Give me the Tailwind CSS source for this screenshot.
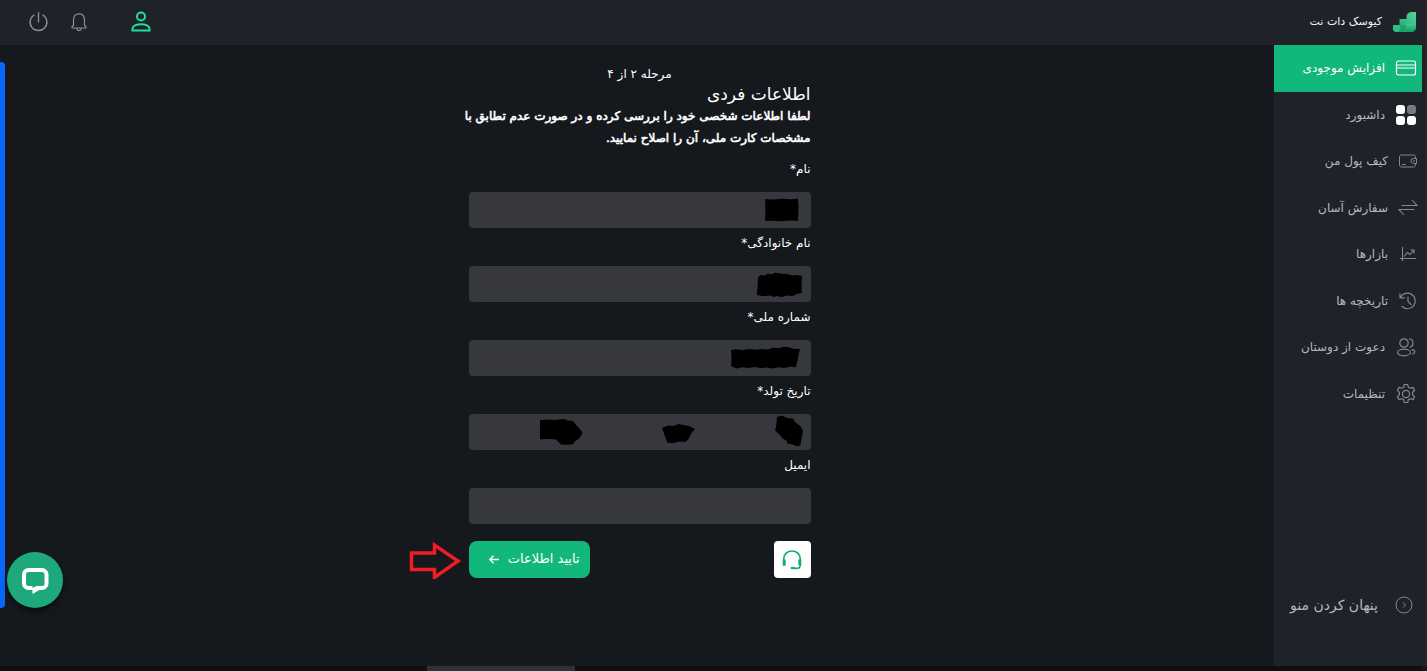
<!DOCTYPE html>
<html lang="fa" dir="rtl">
<head>
<meta charset="utf-8">
<meta name="viewport" content="width=device-width, initial-scale=1">
<title>کیوسک دات نت</title>
<script src="https://cdn.jsdelivr.net/npm/@tailwindcss/browser@4"></script>
</head>
<body class="flex h-screen min-h-[640px] flex-col overflow-hidden bg-[#15181d] font-['DejaVu_Sans',sans-serif] text-xs text-white">

<header class="flex h-[45px] shrink-0 items-center justify-between bg-[#1f2229] pr-[10px] pb-[2px] pl-7">
  <a href="#" class="flex items-center gap-[11px] text-[11px] leading-5 text-gray-100">
    <svg class="size-6" viewBox="0 0 24 24" aria-hidden="true">
      <defs>
        <linearGradient id="lg1" x1="0" y1="1" x2="1" y2="0"><stop offset="0" stop-color="#12a36c"/><stop offset="1" stop-color="#55d49a"/></linearGradient>
        <linearGradient id="lg2" x1="0" y1="0" x2="0" y2="1"><stop offset="0" stop-color="#45c98d"/><stop offset="1" stop-color="#119765"/></linearGradient>
      </defs>
      <path fill="url(#lg1)" d="M13.500 7c0-4 3-5 6-5H23v14c0 4-2 6-6 6H4c-2.500 0-4-1-4-3.500C0 16 1.500 15 4 15h2.500V9h7z"/>
      <path fill="url(#lg2)" d="M13 14h10v2c0 4-2 6-5 6h-5z"/>
      <path fill="#18a671" d="M6.500 15H13v4c0 2-1 3-3 3H6.500z"/>
      <path fill="#2fbd84" d="M0 15h7v3c0 2.500-1.500 4-3.500 4S0 20.500 0 18.500z"/>
    </svg>
    <span>کیوسک دات نت</span>
  </a>
  <div class="flex items-center text-[#8d8f94]">
    <button type="button" aria-label="حساب کاربری" class="ml-[41px] text-[#1be29b]">
      <svg class="size-[22px]" viewBox="0 0 22 22" fill="none" stroke="currentColor" stroke-width="2"><circle cx="11" cy="5.500" r="4"/><path d="M2.500 19.500v-2c0-2.500 4-4.300 8.500-4.300s8.500 1.800 8.500 4.300v2z"/></svg>
    </button>
    <button type="button" aria-label="اعلان‌ها" class="ml-[20px]">
      <svg class="size-5" viewBox="0 0 20 20" fill="none" stroke="currentColor" stroke-width="1.200"><path d="M4.500 13V8c0-4 2-6.200 5.500-6.200S15.500 4 15.500 8v5c.3 1.300 1.700 1.500 1.700 2.300 0 .5-.4.700-.9.700H3.700c-.5 0-.9-.2-.9-.7 0-.8 1.400-1 1.700-2.300z"/><path d="M7.700 16.200c.2 1.700 1 2.300 2.300 2.300s2.100-.6 2.300-2.300"/></svg>
    </button>
    <button type="button" aria-label="خروج">
      <svg class="size-[21px]" viewBox="0 0 20 20" fill="none" stroke="currentColor" stroke-width="1.300" stroke-linecap="round"><path d="M10 1.500v8.800M5.800 3.800a8 8 0 1 0 8.400 0"/></svg>
    </button>
  </div>
</header>

<div class="flex min-h-0 flex-1">
  <aside class="flex w-[153px] shrink-0 flex-col justify-between bg-[#1f2229] pb-[33px] text-[#b5b8bf]">
    <nav aria-label="منوی اصلی" class="grid h-[372px] grid-rows-8 pr-[5px]">
      <a href="#" class="flex items-center gap-[10px] bg-[#12b77c] pr-[5px] text-white">
        <svg class="h-[18px] w-[22px]" viewBox="0 0 22 18" fill="none" stroke="currentColor" stroke-width="1.200"><rect x="1.500" y="2" width="19" height="14" rx="2"/><path d="M1.500 6h19M1.500 9h19"/></svg>
        افزایش موجودی
      </a>
      <a href="#" class="flex items-center gap-[10px] pr-[5px]">
        <svg class="h-[22px] w-[22px]" viewBox="0 0 22 22" fill="#fff"><rect x="1" y="1" width="9" height="9" rx="3"/><rect x="12" y="1" width="9" height="9" rx="3" fill="#777a85"/><rect x="1" y="12" width="9" height="9" rx="3"/><rect x="12" y="12" width="9" height="9" rx="3"/></svg>
        داشبورد
      </a>
      <a href="#" class="flex items-center gap-[10px] pr-1">
        <svg class="size-5 text-[#85878c]" viewBox="0 0 20 20" fill="none" stroke="currentColor"><path d="M17.500 7V6c0-1.200-.8-2-2-2h-12c-1.200 0-2 .8-2 2v8c0 1.200.8 2 2 2h12c1.200 0 2-.8 2-2v-1M18.500 7.500h-3a2.500 2.500 0 0 0 0 5h3zM4 13.500h4"/><circle cx="16" cy="10" r=".5"/></svg>
        کیف پول من
      </a>
      <a href="#" class="flex items-center gap-[10px] pr-1">
        <svg class="size-5 text-[#85878c]" viewBox="0 0 20 20" fill="none" stroke="currentColor" stroke-width="1.100" stroke-linecap="round"><path d="M4 7.500h15l-4.500-5M16 11.500H1l4.500 5"/></svg>
        سفارش آسان
      </a>
      <a href="#" class="flex items-center gap-[10px] pr-1">
        <svg class="size-5 text-[#85878c]" viewBox="0 0 20 20" fill="none" stroke="currentColor" stroke-width="1.100"><path d="M4.500 3v14M2 14.500h16M6 12.500l3.500-4 2.500 2 4-4.500M12.500 6H16v3.500"/></svg>
        بازارها
      </a>
      <a href="#" class="flex items-center gap-[10px] pr-1">
        <svg class="size-5 text-[#85878c]" viewBox="0 0 20 20" fill="none" stroke="currentColor" stroke-width="1.200" stroke-linecap="round"><path d="M2.500 6.500A7.800 7.800 0 1 1 4 15.500M2 2.500v4.300h4.300M10 6v4.500l3 3"/></svg>
        تاریخچه ها
      </a>
      <a href="#" class="flex items-center gap-[10px] pr-[5px]">
        <svg class="h-[22px] w-[22px] text-[#85878c]" viewBox="0 0 22 22" fill="none" stroke="currentColor" stroke-width="1.200" stroke-linecap="round"><circle cx="9" cy="7" r="4.200"/><ellipse cx="9" cy="16.500" rx="6.500" ry="3.300"/><path d="M14.500 3c2.200.1 3.500 1.800 3.500 4 0 2.100-1.200 3.700-3 4M17 13.600c1.600.2 2.700 1 2.700 2.200s-.7 1.900-2 2.200"/></svg>
        دعوت از دوستان
      </a>
      <a href="#" class="flex items-center gap-[10px] pr-[5px]">
        <svg class="h-[22px] w-[22px] text-[#85878c]" viewBox="0 0 22 22" fill="none" stroke="currentColor" stroke-width="1.200" stroke-linejoin="round"><circle cx="11" cy="11" r="3.600"/><path d="M9.300 1.500h3.400l.6 2.700 1.900 1.100 2.700-.9 1.700 3-2 1.900v2.400l2 1.900-1.700 3-2.700-.9-1.900 1.100-.6 2.700H9.300l-.6-2.700-1.900-1.100-2.700.9-1.700-3 2-1.900V9.300l-2-1.900 1.700-3 2.700.9 1.900-1.100z"/></svg>
        تنظیمات
      </a>
    </nav>
    <button type="button" class="flex h-14 items-center gap-[17px] pr-[14px] text-sm">
      <svg class="size-[18px] text-[#85878c]" viewBox="0 0 18 18" fill="none" stroke="currentColor"><circle cx="9" cy="9" r="8"/><path d="M8 6.500 10.500 9 8 11.500"/></svg>
      پنهان کردن منو
    </button>
  </aside>

  <main class="flex min-w-0 flex-1">
    <form class="mx-auto w-[342px] pt-5">
      <p class="text-center leading-[18px]">مرحله ۲ از ۴</p>
      <h1 class="text-[17px] leading-[22px]">اطلاعات فردی</h1>
      <p class="mb-[5px] -ml-2 text-xs leading-[22px] [-webkit-text-stroke:0.6px_white]">لطفا اطلاعات شخصی خود را بررسی کرده و در صورت عدم تطابق با مشخصات کارت ملی، آن را اصلاح نمایید.</p>

      <div class="flex flex-col">
        <label for="first" class="h-[38px] pt-[5px] leading-5">نام*</label>
        <div class="relative">
          <input id="first" type="text" class="block h-9 w-full rounded bg-[#37383d] px-3">
          <svg class="absolute top-[6px] right-[11px] h-6 w-9" viewBox="0 0 36 24"><path d="M1 1l8 .5L18 .8l9 .4 7-.4.500 10-.5 12-9-.3-8 .8-8-.6-8 .3.400-11z"/></svg>
        </div>
        <label for="last" class="h-[38px] pt-[5px] leading-5">نام خانوادگی*</label>
        <div class="relative">
          <input id="last" type="text" class="block h-9 w-full rounded bg-[#37383d] px-3">
          <svg class="absolute top-[6px] right-2 h-[26px] w-[46px]" viewBox="0 0 46 26"><path d="M1 5l3-2 4 .5 3-2 4 .8 3-1.600 6 1 6 .4 5 1.200 5-.3 5 1-.4 8 .2 9-5 1-4 2-5-.4-6 1.300-5-1-3 1.200-4-1.600-5 .8-8-1.300.8-9z"/></svg>
        </div>
        <label for="nid" class="h-[38px] pt-[5px] leading-5">شماره ملی*</label>
        <div class="relative">
          <input id="nid" type="text" class="block h-9 w-full rounded bg-[#37383d] px-3">
          <svg class="absolute top-[6px] right-[10px] h-6 w-[71px]" viewBox="0 0 71 24"><path d="M1 4l5-.8 6 .9 7-1 6 .7 7-.9 6 .6 5-1.800 6 .4 5-1.300 5 .5 4 1.400 7 .4-1.500 6-1 6-2 6.400-5-1-6 1.600-6-.8-6 1.100-6-1-6 .7-6-1.200-6 1.200-6-.8-6 1.300L1 20l.5-8z"/></svg>
        </div>
        <label for="day" class="h-[38px] pt-[5px] leading-5">تاریخ تولد*</label>
        <div class="relative grid h-9 grid-cols-3 overflow-hidden rounded bg-[#37383d]">
          <input id="day" type="text" class="min-w-0 px-3">
          <input type="text" aria-label="ماه" class="min-w-0 px-3">
          <input type="text" aria-label="سال" class="min-w-0 px-3">
          <svg class="absolute inset-0 h-full w-full" viewBox="0 0 342 36"><path d="M71 6l9-.5 6 .6 9-1 4 1.500 5 .5 3 4 3 2.600 3.500 5-2.500 5-5 3.500-2 3-6 .6-6-.4-3-3-2-2-6-.3-10 .2z"/><path d="M193 14l6-2.500 5 .4 6-2 6 1.600 4 .4 6 3-3.500 4-3 6-3 3-7-.4-5 1.800-6-.6-2-5z"/><path d="M308 3l5-1.500 5 2.500 6 .6 2.500 4 5 3.400 2.500 5-1.500 8-1 6-3 1.500-5-2-5-1-1-3-4-2-3-4-4.500-4 1.300-5z"/></svg>
        </div>
        <label for="email" class="h-[38px] pt-[5px] leading-5">ایمیل</label>
        <input id="email" type="email" class="block h-9 w-full rounded bg-[#37383d] px-3">
      </div>

      <div class="mt-[17px] flex items-center justify-between">
        <button type="button" aria-label="پشتیبانی" class="flex size-[37px] items-center justify-center rounded bg-white text-[#16ab79]">
          <svg class="size-5" viewBox="0 0 20 20" fill="none" stroke="currentColor" stroke-width="1.700"><path d="M1.800 10V8.500a8.200 7.500 0 0 1 16.400 0V15c0 2.300-1.200 3.400-3.500 3.400H12"/><path stroke-width="3" d="M2.200 9.500v6.300M17.800 9.500v5.500"/><path stroke-width="2.200" d="M8.800 18h4"/></svg>
        </button>
        <div class="relative">
          <button type="submit" class="flex h-[37px] w-[121px] items-center gap-2 rounded-lg bg-[#12b77c] pr-[10px] pb-[2px] text-[13px] text-white">
            تایید اطلاعات
            <svg class="h-3 w-3" viewBox="0 0 12 12" fill="none" stroke="currentColor" stroke-width="1.300"><path d="M11 6.500H2M5.500 2.800 1.800 6.500l3.700 3.700"/></svg>
          </button>
          <svg class="absolute top-0 right-full mr-2 ml-2 h-[38px] w-[52px]" viewBox="0 0 52 38" fill="none" stroke="#ee1c25" stroke-width="3.500" aria-hidden="true"><path d="M2.500 12h23V4L49 20 25.500 36.500V28.500h-23z"/></svg>
        </div>
      </div>
    </form>
    <div class="w-[5px] shrink-0 pt-[17px] pb-[58px]"><div class="h-full rounded-r-sm bg-[#0767ff]"></div></div>
  </main>
</div>

<div class="mr-[5px] flex h-[5px] shrink-0 bg-[#0f0f11]" dir="ltr">
  <div class="ml-[30%] w-[148px] bg-[#303136]"></div>
</div>

<button type="button" aria-label="گفتگو" class="fixed bottom-[63px] left-[7px] flex size-14 items-center justify-center rounded-full bg-[#1ea97c] shadow-md shadow-black/50">
  <svg class="h-7 w-7" viewBox="0 0 28 28"><rect x="3" y="4" width="22.500" height="18" rx="4.500" fill="none" stroke="#fff" stroke-width="4"/><path fill="#fff" d="M11.500 21v7l8.500-5v-3z"/><path fill="#1ea97c" d="M11.500 20v2l4-2z"/></svg>
</button>
</body>
</html>
